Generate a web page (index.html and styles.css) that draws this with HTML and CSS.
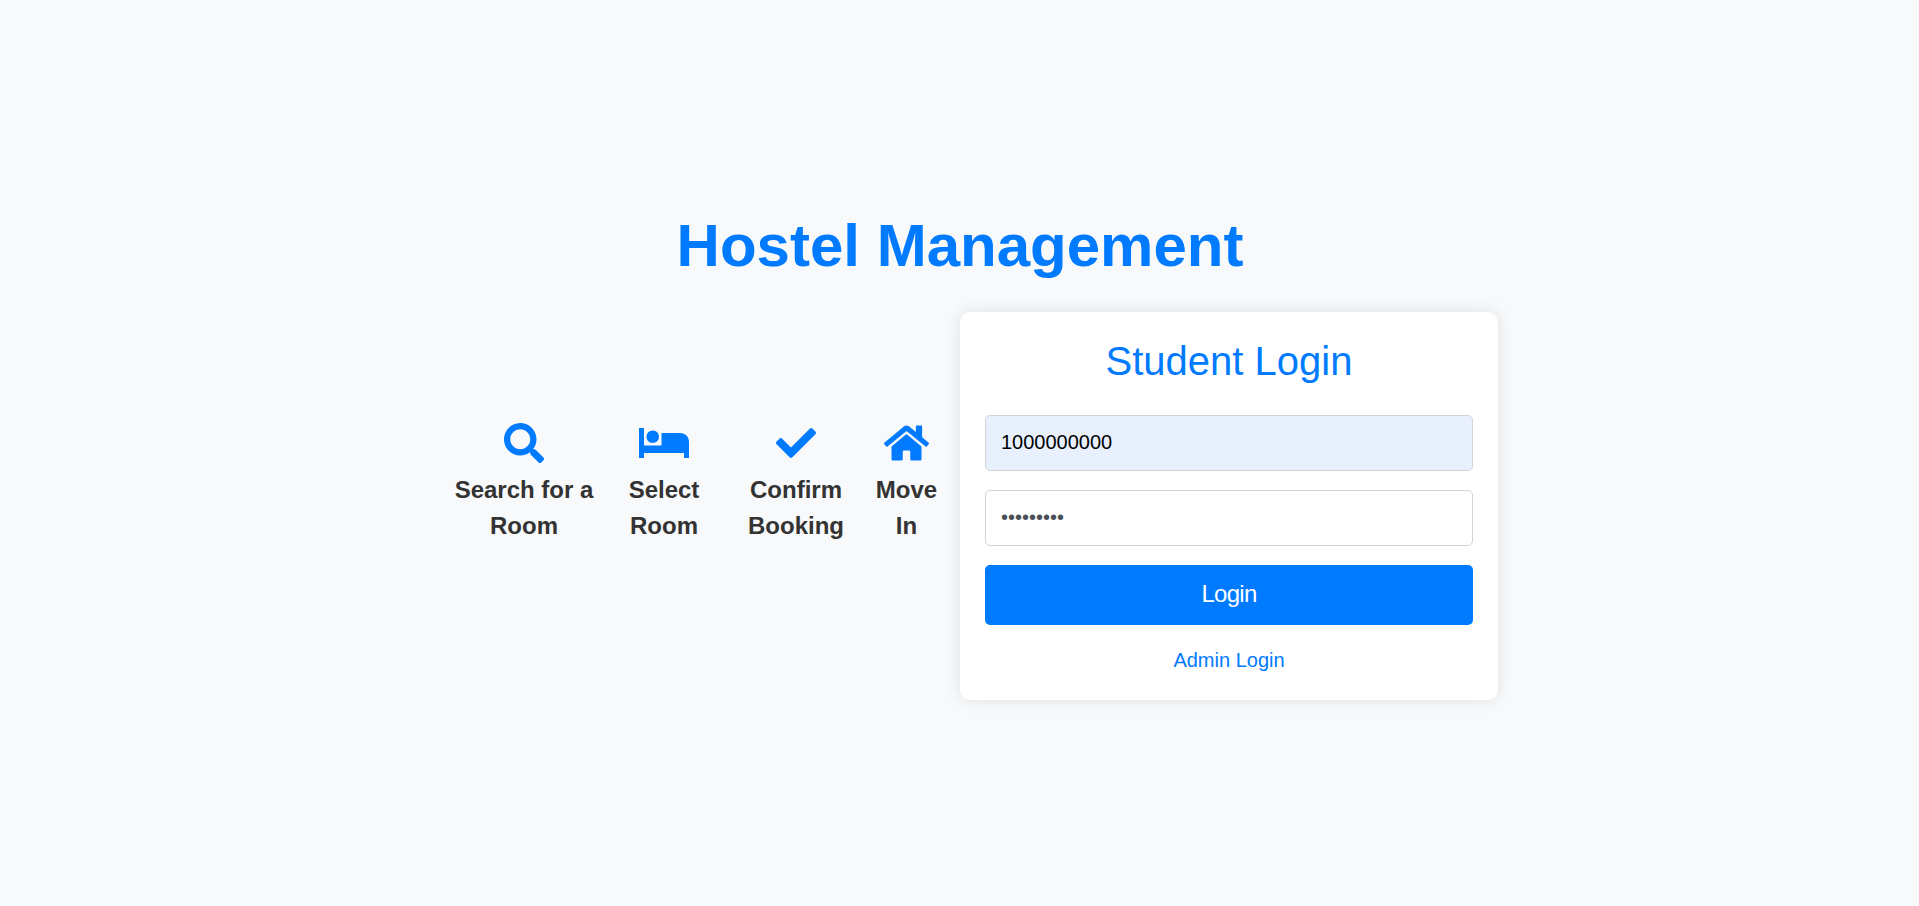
FILE: index.html
```html
<!DOCTYPE html>
<html lang="en">
<head>
<meta charset="utf-8">
<title>Hostel Management</title>
<link rel="stylesheet" href="styles.css">
</head>
<body>
<main class="page">
  <h1 class="title">Hostel Management</h1>
  <div class="content">
    <section class="steps">
      <div class="step">
        <svg class="icon" viewBox="0 0 512 512" width="40" height="40"><path d="M505 442.700L405.300 343c-4.500-4.500-10.600-7-17-7H372c27.600-35.300 44-79.700 44-128C416 93.100 322.900 0 208 0S0 93.100 0 208s93.100 208 208 208c48.300 0 92.700-16.400 128-44v16.300c0 6.400 2.500 12.500 7 17l99.700 99.700c9.400 9.400 24.600 9.400 33.900 0l28.300-28.300c9.400-9.400 9.400-24.600.1-34zM208 336c-70.700 0-128-57.200-128-128 0-70.700 57.200-128 128-128 70.700 0 128 57.200 128 128 0 70.700-57.200 128-128 128z"/></svg>
        <p class="label">Search for a<br>Room</p>
      </div>
      <div class="step">
        <svg class="icon" viewBox="0 0 640 512" width="50" height="40"><path d="M176 256c44.110 0 80-35.890 80-80s-35.890-80-80-80-80 35.890-80 80 35.890 80 80 80zm352-128H298q-10 0-10 10v150H64V68q0-4-4-4H4q-4 0-4 4v376q0 4 4 4h56q4 0 4-4v-60h512v60q0 4 4 4h56q4 0 4-4V240c0-61.860-50.140-112-112-112z"/></svg>
        <p class="label">Select<br>Room</p>
      </div>
      <div class="step">
        <svg class="icon" viewBox="0 0 512 512" width="40" height="40"><path d="M173.898 439.404l-166.400-166.400c-9.997-9.997-9.997-26.206 0-36.204l36.203-36.204c9.997-9.998 26.207-9.998 36.204 0L192 312.690 432.095 72.596c9.997-9.997 26.207-9.997 36.204 0l36.203 36.204c9.997 9.997 9.997 26.206 0 36.204l-294.400 294.401c-9.998 9.997-26.207 9.997-36.204-.001z"/></svg>
        <p class="label">Confirm<br>Booking</p>
      </div>
      <div class="step">
        <svg class="icon" viewBox="0 0 576 512" width="45" height="40"><path d="M280.370 148.260L96 300.110V464a16 16 0 0 0 16 16l112.060-.290a16 16 0 0 0 15.920-16V368a16 16 0 0 1 16-16h64a16 16 0 0 1 16 16v95.640a16 16 0 0 0 16 16.050L464 480a16 16 0 0 0 16-16V300L295.670 148.260a12.190 12.190 0 0 0-15.300 0zM571.600 251.470L488 182.560V44.050a12 12 0 0 0-12-12h-56a12 12 0 0 0-12 12v72.610L318.470 43a48 48 0 0 0-61 0L4.340 251.470a12 12 0 0 0-1.600 16.900l25.500 31A12 12 0 0 0 45.150 301l235.220-193.740a12.190 12.190 0 0 1 15.300 0L530.900 301a12 12 0 0 0 16.900-1.600l25.500-31a12 12 0 0 0-1.700-16.930z"/></svg>
        <p class="label">Move<br>In</p>
      </div>
    </section>
    <form class="card">
      <h2 class="card-title">Student Login</h2>
      <input class="field filled" type="text" value="1000000000" aria-label="Student ID">
      <input class="field" type="password" value="password1" aria-label="Password">
      <button class="submit" type="button">Login</button>
      <a class="admin" href="#">Admin Login</a>
    </form>
  </div>
</main>
</body>
</html>
```
FILE: styles.css
```css
* { box-sizing: border-box; }

body {
  margin: 0;
  background: #f8f9fa;
  font-family: "Liberation Sans", Arial, sans-serif;
  font-size: 20px;
  line-height: 1.5;
}

.page {
  min-height: 906px;
  padding-top: 210px;
  display: flex;
  flex-direction: column;
  align-items: center;
}

.title {
  margin: 0 0 30px;
  padding-left: 1px;
  font-size: 60px;
  line-height: 72px;
  font-weight: 700;
  color: #007bff;
}

.content {
  width: 1077px;
  display: grid;
  grid-template-columns: 539px 538px;
  align-items: start;
}

.steps {
  display: grid;
  grid-template-columns: 146px 134px 130px 91px;
  padding: 111px 0 0 30px;
}

.step {
  display: flex;
  flex-direction: column;
  align-items: center;
}

.icon {
  display: block;
  fill: #007bff;
}

.label {
  margin: 9px 0 0;
  font-size: 24px;
  line-height: 36px;
  font-weight: 700;
  text-align: center;
  white-space: nowrap;
  color: #333;
}

.card {
  padding: 25px;
  display: flex;
  flex-direction: column;
  background: #fff;
  border-radius: 10px;
  box-shadow: 0 0 15px rgba(0, 0, 0, 0.1);
}

.card-title {
  margin: 0 0 30px;
  font-size: 40px;
  line-height: 48px;
  font-weight: 400;
  text-align: center;
  color: #007bff;
}

.field {
  width: 100%;
  height: 56px;
  margin: 0 0 19px;
  padding: 11px 15px 13px;
  border: 1px solid #ced4da;
  border-radius: 5px;
  background: #fff;
  font: inherit;
  color: #495057;
}

.filled {
  background: #e8f0fe;
  color: #000;
}

.submit {
  height: 60px;
  margin: 0 0 20px;
  padding: 0 0 2px;
  border: 0;
  border-radius: 5px;
  background: #007bff;
  font: inherit;
  font-size: 24px;
  letter-spacing: -0.7px;
  color: #fff;
}

.admin {
  text-align: center;
  text-decoration: none;
  color: #007bff;
}
```
